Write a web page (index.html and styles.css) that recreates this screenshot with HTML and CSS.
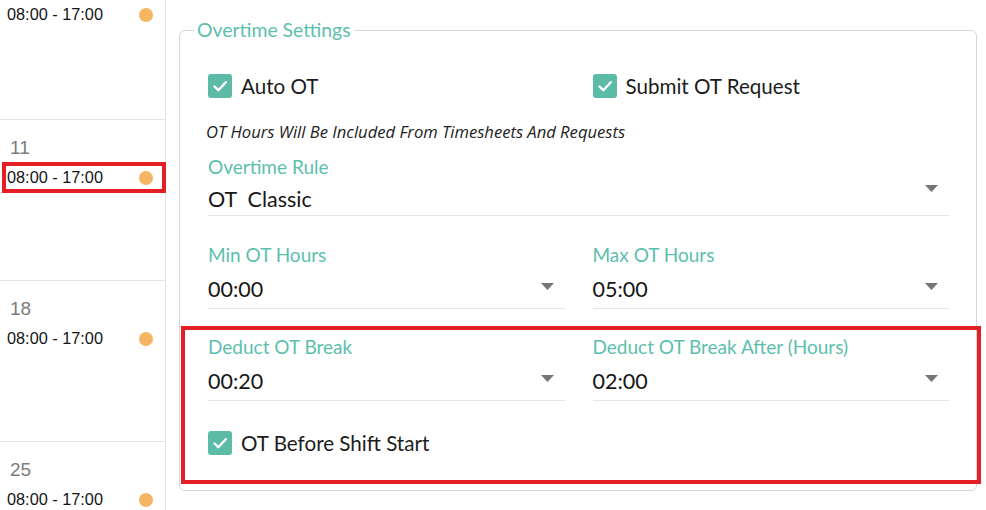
FILE: index.html
```html
<!DOCTYPE html>
<html lang="en">
<head>
<meta charset="utf-8">
<title>Overtime Settings</title>
<link rel="stylesheet" href="styles.css">
</head>
<body>
<div class="page">
  <aside class="cal">
    <div class="day day--partial">
      <div class="shift"><span>08:00 - 17:00</span><i class="dot"></i></div>
    </div>
    <div class="day">
      <div class="day-num">11</div>
      <div class="shift shift--marked"><span>08:00 - 17:00</span><i class="dot"></i></div>
    </div>
    <div class="day">
      <div class="day-num">18</div>
      <div class="shift"><span>08:00 - 17:00</span><i class="dot"></i></div>
    </div>
    <div class="day">
      <div class="day-num">25</div>
      <div class="shift"><span>08:00 - 17:00</span><i class="dot"></i></div>
    </div>
  </aside>

  <fieldset class="settings">
    <legend class="settings-title">Overtime Settings</legend>

    <div class="grid2">
      <label class="check">
        <svg class="check-box" width="24" height="24" viewBox="0 0 24 24"><rect width="24" height="24" rx="3" fill="#5bbba7"/><path d="M6.5 12.5 L10.3 16.2 L17.8 8.2" fill="none" stroke="#fff" stroke-width="2.4" stroke-linecap="round" stroke-linejoin="round"/></svg>
        <span>Auto OT</span>
      </label>
      <label class="check">
        <svg class="check-box" width="24" height="24" viewBox="0 0 24 24"><rect width="24" height="24" rx="3" fill="#5bbba7"/><path d="M6.5 12.5 L10.3 16.2 L17.8 8.2" fill="none" stroke="#fff" stroke-width="2.4" stroke-linecap="round" stroke-linejoin="round"/></svg>
        <span>Submit OT Request</span>
      </label>
    </div>

    <p class="note">OT Hours Will Be Included From Timesheets And Requests</p>

    <div class="field field--first">
      <div class="field-label">Overtime Rule</div>
      <div class="select select--first">
        <span class="select-value">OT&nbsp; Classic</span>
        <svg class="caret" width="13" height="7" viewBox="0 0 13 7"><path d="M0 0 H13 L6.5 7 Z" fill="#757575"/></svg>
      </div>
    </div>

    <div class="grid2 grid2--fields">
      <div class="field">
        <div class="field-label">Min OT Hours</div>
        <div class="select">
          <span class="select-value">00:00</span>
          <svg class="caret" width="13" height="7" viewBox="0 0 13 7"><path d="M0 0 H13 L6.5 7 Z" fill="#757575"/></svg>
        </div>
      </div>
      <div class="field">
        <div class="field-label">Max OT Hours</div>
        <div class="select">
          <span class="select-value">05:00</span>
          <svg class="caret" width="13" height="7" viewBox="0 0 13 7"><path d="M0 0 H13 L6.5 7 Z" fill="#757575"/></svg>
        </div>
      </div>
    </div>

    <div class="marked">
      <div class="grid2">
        <div class="field">
          <div class="field-label">Deduct OT Break</div>
          <div class="select">
            <span class="select-value">00:20</span>
            <svg class="caret" width="13" height="7" viewBox="0 0 13 7"><path d="M0 0 H13 L6.5 7 Z" fill="#757575"/></svg>
          </div>
        </div>
        <div class="field">
          <div class="field-label">Deduct OT Break After (Hours)</div>
          <div class="select">
            <span class="select-value">02:00</span>
            <svg class="caret" width="13" height="7" viewBox="0 0 13 7"><path d="M0 0 H13 L6.5 7 Z" fill="#757575"/></svg>
          </div>
        </div>
      </div>
      <label class="check check--last">
        <svg class="check-box" width="24" height="24" viewBox="0 0 24 24"><rect width="24" height="24" rx="3" fill="#5bbba7"/><path d="M6.5 12.5 L10.3 16.2 L17.8 8.2" fill="none" stroke="#fff" stroke-width="2.4" stroke-linecap="round" stroke-linejoin="round"/></svg>
        <span>OT Before Shift Start</span>
      </label>
    </div>
  </fieldset>
</div>
</body>
</html>
```

FILE: styles.css
```css
* { box-sizing: border-box; }

html, body {
  margin: 0;
  padding: 0;
  background: #fff;
  height: 510px;
  overflow: hidden;
}

.page {
  display: flex;
  align-items: flex-start;
  font-family: Lato, "Open Sans", sans-serif;
  color: #1c1c1c;
}

/* calendar column */
.cal {
  flex: none;
  width: 166px;
  height: 510px;
  border-right: 1px solid #e6e6e6;
  font-family: "Liberation Sans", Arial, sans-serif;
}

.day {
  height: 161px;
  border-top: 1px solid #e3e3e3;
  padding-top: 16px;
}

.day--partial {
  height: 119px;
  border-top: 0;
  padding-top: 3px;
}

.day--partial .shift { margin-top: 0; }

.day-num {
  padding-left: 10px;
  font-size: 19px;
  line-height: 24px;
  color: #7c7c7c;
}

.shift {
  margin: 6px 0 0 6px;
  width: 156px;
  height: 23px;
  padding: 0 9px 0 1px;
  display: flex;
  align-items: center;
  justify-content: space-between;
  font-size: 16.3px;
  color: #141414;
}

.shift--marked {
  outline: 4px solid #e41f26;
}

.dot {
  width: 14px;
  height: 14px;
  border-radius: 50%;
  background: #f5b562;
}

/* settings */
.settings {
  flex: 1;
  min-width: 0;
  margin: 18px 9px 0 13px;
  padding: 32px 27px 6px 28px;
  border: 1px solid #d8d8d8;
  border-radius: 6px;
}

.settings-title {
  margin-left: -14px;
  padding: 0 3px;
  font-size: 19.4px;
  line-height: 24px;
  color: #5cbfad;
}

.grid2 {
  display: grid;
  grid-template-columns: 1fr 1fr;
  column-gap: 28px;
}

.check {
  display: flex;
  align-items: center;
  gap: 9px;
  font-size: 20.6px;
  line-height: 24px;
  color: #1c1c1c;
}

.check-box { flex: none; display: block; }

.note {
  margin: 24px 0 0 -2px;
  font-family: "Open Sans", Lato, sans-serif;
  font-size: 16.6px;
  line-height: 20px;
  font-style: italic;
  color: #222;
}

.field--first { margin-top: 13px; }

.field-label {
  font-size: 19px;
  line-height: 24px;
  color: #5cbfad;
}

.select {
  display: flex;
  justify-content: space-between;
  align-items: flex-start;
  border-bottom: 1px solid #e6e6e6;
  padding-right: 11px;
}

.select-value {
  font-size: 21.5px;
  line-height: 30px;
  padding: 7px 0 4px;
  color: #161616;
}

.caret { flex: none; margin-top: 16px; }

.select--first .select-value { padding: 5px 0 1px; }
.select--first .caret { margin-top: 6px; }

.grid2--fields { margin-top: 27px; }

.marked {
  margin: 17px -32px 0 -27px;
  border: 4px solid #e41f26;
  padding: 5px 28px 25px 23px;
}

.check--last { margin-top: 30px; }
```
